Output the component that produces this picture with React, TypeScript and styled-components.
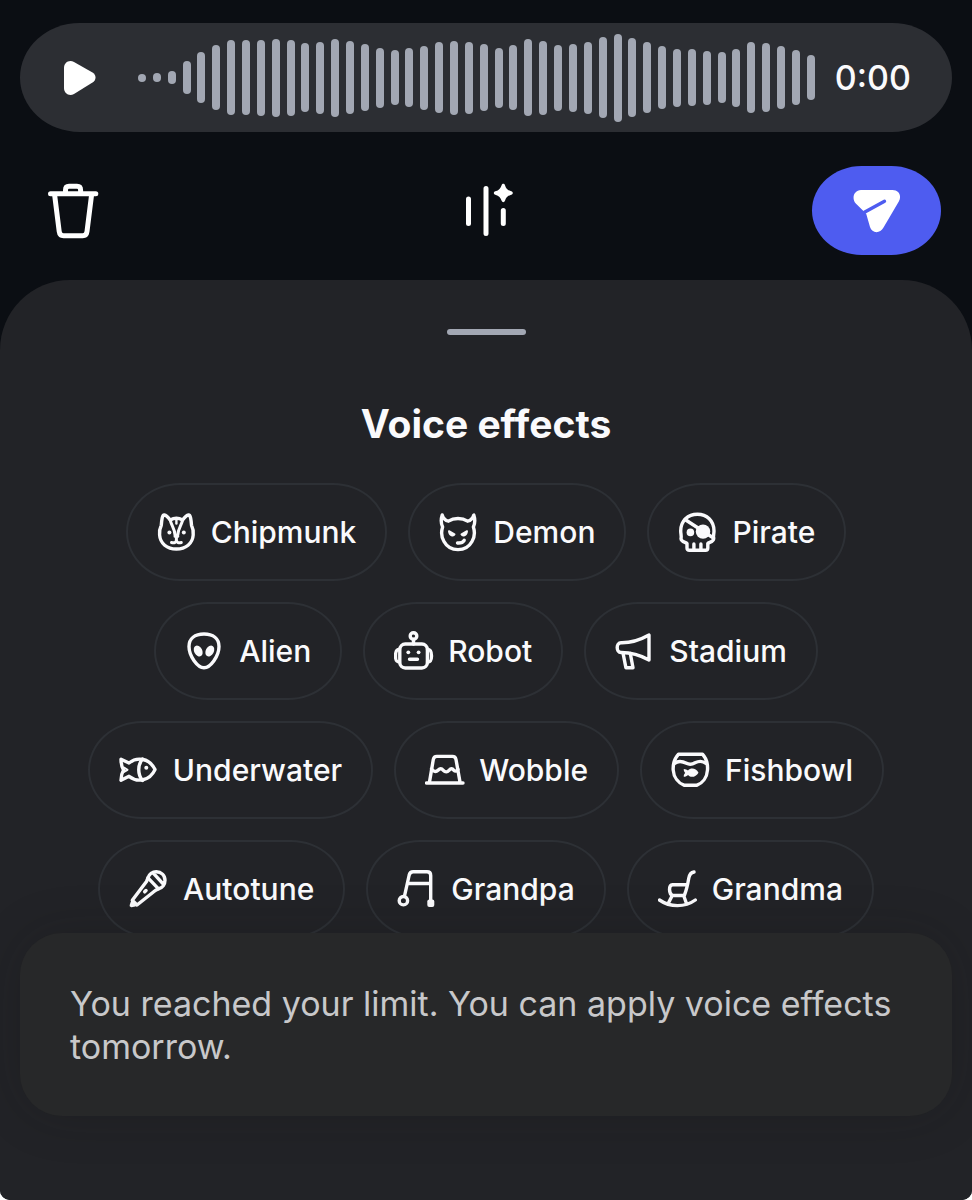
import React from "react";
import styled, { createGlobalStyle } from "styled-components";

const GlobalStyle = createGlobalStyle`
  * { box-sizing: border-box; }
  body {
    margin: 0;
    background: #fff;
    color: #fafafc;
    font-family: Inter, "Liberation Sans", sans-serif;
  }
  button { font: inherit; color: inherit; }
`;

const Screen = styled.main`
  display: flex;
  flex-direction: column;
  min-height: 100vh;
  overflow: hidden;
  border-radius: 0 0 10px 10px;
  background: #0b0e13;
`;

const VoiceBar = styled.section`
  display: flex;
  align-items: center;
  height: 109px;
  margin: 23px 20px 0;
  padding: 0 41px 0 44px;
  border-radius: 60px / 55px;
  background: #2c2e33;
`;

const BareButton = styled.button`
  display: flex;
  align-items: center;
  justify-content: center;
  padding: 0;
  border: 0;
  background: none;
  cursor: pointer;
`;

const Waveform = styled.div`
  flex: 1;
  display: flex;
  align-items: center;
  justify-content: space-between;
  height: 90px;
  margin: 0 20px 0 42px;
`;

const Bar = styled.span`
  width: 8px;
  border-radius: 4px;
  background: #a2a7b3;
`;

const Time = styled.time`
  min-width: 76px;
  font-size: 34px;
  font-weight: 500;
  line-height: 44px;
  text-align: right;
`;

const Toolbar = styled.div`
  display: grid;
  grid-template-columns: 1fr auto 1fr;
  align-items: center;
  height: 89px;
  margin: 34px 31px 25px;

  > :last-child { justify-self: end; }
`;

const DeleteButton = styled(BareButton)`
  justify-self: start;
  padding: 0 17px;
`;

const SendButton = styled(BareButton)`
  width: 129px;
  height: 89px;
  border-radius: 50px / 45px;
  background: #4e5cf0;
`;

const Sheet = styled.section`
  position: relative;
  flex: 1;
  display: flex;
  flex-direction: column;
  align-items: center;
  padding: 49px 20px 262px;
  border-radius: 70px 70px 0 0;
  background: #222327;
`;

const Handle = styled.div`
  width: 79px;
  height: 6px;
  border-radius: 3px;
  background: #a2a7b3;
`;

const Title = styled.h1`
  margin: 64px 0 35px;
  font-size: 39px;
  font-weight: 700;
  line-height: 49px;
`;

const Effects = styled.div`
  display: flex;
  flex-direction: column;
  gap: 21px;
`;

const EffectRow = styled.div`
  display: flex;
  justify-content: center;
  gap: 21px;
`;

const Chip = styled.button`
  display: flex;
  align-items: center;
  gap: 14px;
  height: 98px;
  padding: 0 29px;
  border: 2px solid #2d3035;
  border-radius: 54px / 49px;
  background: none;
  font-size: 30px;
  font-weight: 500;
  line-height: 36px;
  cursor: pointer;
`;

const ChipIcon = styled.svg`
  flex: none;
  width: 40px;
  height: 40px;
  fill: none;
  stroke: currentColor;
  stroke-width: 3.4;
  stroke-linecap: round;
  stroke-linejoin: round;

  .solid { fill: currentColor; }
  .dot { fill: currentColor; stroke: none; }
`;

const Toast = styled.p`
  position: absolute;
  right: 20px;
  bottom: 84px;
  left: 20px;
  margin: 0;
  padding: 49px 50px 48px;
  border-radius: 42px;
  background: #272829;
  box-shadow: 0 0 50px rgba(20, 20, 22, 0.2);
  color: #c8c8ca;
  font-size: 34px;
  line-height: 43px;
`;

const levels = [
  8, 9, 13, 33, 51, 65, 75, 75, 76, 78, 76, 69, 72, 78, 73, 67, 60, 55, 59, 64, 71, 74, 72,
  67, 60, 65, 77, 74, 66, 68, 72, 81, 88, 79, 71, 63, 58, 57, 54, 51, 58, 71, 69, 63, 55, 45,
];

type Effect = { name: string; icon: React.ReactNode };

const rows: Effect[][] = [
  [
    {
      name: "Chipmunk",
      icon: (
        <>
          <path d="M13.200 8C11.400 5.500 9.400 3.300 7.300 3C5.200 2.700 4.700 8 4.300 13.200C2.900 16 2.200 19 2.600 23C3.200 31.500 10 37 19.400 37S35.600 31.500 36.200 23C36.600 19 35.900 16 34.500 13.200C34.100 8 33.600 2.700 31.500 3C29.400 3.300 27.400 5.500 25.600 8C21.500 5.800 17.300 5.800 13.200 8Z" />
          <path strokeWidth="3" d="M13.200 8C14.200 13.500 17.800 16.500 18 23M25.600 8C24.600 13.500 21 16.500 20.800 23" />
          <path strokeWidth="2.400" d="M19.400 7.500V11.500" />
          <path strokeWidth="3" d="M18 24.300H20.800M19.400 24V28.500M14.500 30.500C17 31.300 19 30.500 19.400 28.500C19.800 30.500 21.800 31.300 24.300 30.500" />
          <circle className="dot" cx="12.400" cy="20.500" r="2" />
          <circle className="dot" cx="26.800" cy="20.500" r="2" />
        </>
      ),
    },
    {
      name: "Demon",
      icon: (
        <>
          <path d="M3.200 3C1.600 8 2.200 12 3.600 15C2 20 2.300 25 5 29.500C8 35 13 37.600 19 37.600S30 35 33 29.500C35.700 25 36 20 34.400 15C35.800 12 36.400 8 34.800 3C33.800 6.500 31.500 8.600 28.600 9.200C23 5.500 15 5.500 9.400 9.200C6.500 8.600 4.200 6.500 3.200 3Z" />
          <path className="solid" strokeWidth="2" d="M10 19.200L15.500 22.300C14.500 24.300 10.500 24 10 19.200ZM28 19.200L22.500 22.300C23.500 24.300 27.500 24 28 19.200Z" />
          <path d="M18.500 31C21.500 31.300 24 30.300 25.200 28.300" />
        </>
      ),
    },
    {
      name: "Pirate",
      icon: (
        <>
          <path d="M9 31.500C8 30.200 3 30 3 26.500C3.700 24.500 2.700 22 2.700 19C2.700 8.500 10 2.200 19.400 2.200S36 8.500 36 19C36 22 35 24.500 35.700 26.500C35.700 30 30.800 30.200 29.800 31.500V36C29.800 37.700 28.900 38.300 27.500 38.300H11.300C9.900 38.300 9 37.700 9 36Z" />
          <path d="M15.900 32V38M22.900 32V38M7 7.500L35.500 26" />
          <circle className="dot" cx="12.400" cy="20.400" r="3.800" />
          <circle className="dot" cx="25" cy="19.600" r="7.200" />
        </>
      ),
    },
  ],
  [
    {
      name: "Alien",
      icon: (
        <>
          <path d="M19 3C10 3 4 7.500 4 15.500C4 25 12.500 36.700 19 36.700S34 25 34 15.500C34 7.500 28 3 19 3Z" />
          <ellipse className="dot" cx="13.200" cy="20" rx="4" ry="5.800" transform="rotate(-28 13.200 20)" />
          <ellipse className="dot" cx="24.800" cy="20" rx="4" ry="5.800" transform="rotate(28 24.800 20)" />
        </>
      ),
    },
    {
      name: "Robot",
      icon: (
        <>
          <circle cx="19.500" cy="5" r="3.300" />
          <path d="M19.500 8.500V13M15.500 28.300H23.500M5.500 18.500C2.500 18.500 1.500 20 1.500 25S2.500 31 5.500 31M33.500 18.500C36.500 18.500 37.500 20 37.500 25S36.500 31 33.500 31" />
          <rect x="5.800" y="13" width="27.600" height="24" rx="5.500" />
          <circle className="dot" cx="14.300" cy="21.300" r="1.900" />
          <circle className="dot" cx="24.600" cy="21.300" r="1.900" />
        </>
      ),
    },
    {
      name: "Stadium",
      icon: (
        <>
          <path d="M6 11.800C16 12 25 9 34 4V29C26 24.500 16 21.500 6 21.500C3.500 21.500 2.200 19 2.200 16.600S3.500 11.800 6 11.800Z" />
          <path d="M8 22L10.900 36.700H18L15.300 22.500" />
        </>
      ),
    },
  ],
  [
    {
      name: "Underwater",
      icon: (
        <>
          <path d="M2 9.200L10 13C18 6.500 30.500 8 36 19.600C30.500 31.500 18 32.500 10 26.300L2 30.300C2 26.500 2.500 23.500 4.500 20C2.500 16.500 2 13 2 9.200Z" />
          <path d="M23.500 9C18.500 15 18.500 24.500 23.500 30.500" />
          <path strokeWidth="2" d="M5 17.500L8.500 19.800L5 22" />
          <circle className="dot" cx="27.300" cy="17.800" r="2" />
        </>
      ),
    },
    {
      name: "Wobble",
      icon: (
        <>
          <path d="M1.500 33H38M4.500 32L8.300 9.500C8.700 7.500 9.800 6.400 11.800 6.400H27.500C29.500 6.400 30.600 7.500 31 9.500L35 32" />
          <path d="M6.500 19C8.500 21.800 11 22.300 13 20.300C15 18.300 16.500 18.300 18.300 20.300C20.300 22.500 22.200 22.300 24 20.300C25.800 18.300 27.300 18.300 28.800 20.300C30.300 21.800 31.800 21.200 33 19.500" />
        </>
      ),
    },
    {
      name: "Fishbowl",
      icon: (
        <>
          <path d="M7.500 4.200H31.500C35 8 37 13 36.500 20C36 27.500 31.500 33 26 35.200H13C7.500 33 2.700 27.500 2.200 20C1.800 13 4 8 7.500 4.200Z" />
          <path d="M3.500 13.500C7 10.500 12 11.500 15.500 13.300C18.500 14.800 21 14.500 24 12.800C28 10.800 32 11 35 13.500" />
          <path className="dot" d="M12.800 19C14.500 19 16 19.800 17 20.500C20 17.300 25 18.200 27.500 22.700C25 27 20 28.300 17 25C16 26 14.500 26.800 12.800 26.800C12.500 25 13.200 24 14.200 22.900C13.200 21.800 12.500 20.500 12.800 19Z" />
        </>
      ),
    },
  ],
  [
    {
      name: "Autotune",
      icon: (
        <>
          <path d="M19 8.800C20 5 23.500 2.700 27.300 2.700C32.200 2.700 36 6.300 36 11.200C36 15.300 33.500 18.800 29.500 19.800ZM24.300 4.200L34.300 15.200" />
          <path d="M19 8.800L17.500 12.500L3.300 31.300L8 36L26.300 21.500L29.500 19.800M3.300 33.500L2.300 36.500L6 35.800" />
          <path strokeWidth="3.500" d="M15.700 22.800L17 21.500" />
        </>
      ),
    },
    {
      name: "Grandpa",
      icon: (
        <>
          <circle cx="6.400" cy="31.700" r="4.200" />
          <path d="M7.500 27L12.200 6C12.800 3.700 14 2.800 16.200 2.800H30C32.300 2.800 33.700 4.200 33.700 6.500V32M10.500 14.500H33.700" />
          <rect className="dot" x="30.300" y="30.500" width="7" height="7.500" rx="2" />
        </>
      ),
    },
    {
      name: "Grandma",
      icon: (
        <>
          <path d="M1.500 31C12 38.500 27 38.500 37.300 31M36 3C32.500 3.500 31.300 6 30.700 9.500C29.800 15 28.500 21 26.300 26.500H14.500C10.800 25 10.300 16 14.500 15.700H29.300M14 27L10.200 34.500M25.800 27L28.500 34.500" />
        </>
      ),
    },
  ],
];

export default function App() {
  return (
    <Screen>
      <GlobalStyle />
      <VoiceBar aria-label="Voice message">
        <BareButton type="button" aria-label="Play">
          <svg width="32" height="36" viewBox="0 0 32 36" fill="#fff">
            <path d="M0 8C0 2.500 5 -.5 10 2L28.500 12.500C32.500 15 32.500 20 28.500 22.500L10 34C5 36.500 0 33.500 0 28Z" />
          </svg>
        </BareButton>
        <Waveform aria-hidden="true">
          {levels.map((level, i) => (
            <Bar key={i} style={{ height: level }} />
          ))}
        </Waveform>
        <Time>0:00</Time>
      </VoiceBar>

      <Toolbar>
        <DeleteButton type="button" aria-label="Delete">
          <svg width="51" height="56" viewBox="0 0 51 56" fill="none" stroke="#fff" strokeWidth="5" strokeLinecap="round" strokeLinejoin="round">
            <path d="M2.500 10.700H47.800" />
            <path d="M17.500 9.500V7C17.500 4.500 18.500 3.200 21 3.200H29C31.500 3.200 32.600 4.500 32.600 7V9.500" />
            <path d="M6.700 12.500L11.200 48.500C11.600 51.500 13 52.800 15.500 52.800H34.700C37.200 52.800 38.600 51.500 39 48.500L43.500 12.500" />
          </svg>
        </DeleteButton>
        <BareButton type="button" aria-label="Voice effects">
          <svg width="56" height="56" viewBox="-6 0 56 56" fill="none" stroke="#fff" strokeWidth="5" strokeLinecap="round">
            <path d="M4.500 16V40.500M22 5.500V50.500M39.300 27.500V40.500" />
            <path fill="#fff" stroke="none" d="M37.600 2.200C38.300 .3 40.300 .3 41 2.200C42 5.300 43.500 7.300 47.300 8.300C49.300 9 49.300 11 47.300 11.700C43.500 12.700 42 14.700 41 17.800C40.300 19.700 38.300 19.700 37.600 17.800C36.600 14.700 35.100 12.700 31.300 11.700C29.300 11 29.300 9 31.300 8.300C35.100 7.300 36.600 5.300 37.600 2.200Z" />
          </svg>
        </BareButton>
        <SendButton type="button" aria-label="Send">
          <svg width="48" height="44" viewBox="0 0 48 44">
            <path fill="#fff" d="M8 1H39.500C46 1 49 7 45.800 12.500L30.500 38.500C27 45 19 44.500 17 38L13.200 24.800L2.800 14.500C-1.800 9.500 1 1 8 1Z" />
            <path fill="none" stroke="#4e5cf0" strokeWidth="3.400" strokeLinecap="round" d="M10.500 23.800L31.500 12.200" />
          </svg>
        </SendButton>
      </Toolbar>

      <Sheet aria-labelledby="effects-title">
        <Handle />
        <Title id="effects-title">Voice effects</Title>
        <Effects>
          {rows.map((row) => (
            <EffectRow key={row[0].name}>
              {row.map((effect) => (
                <Chip key={effect.name} type="button">
                  <ChipIcon viewBox="0 0 40 40" aria-hidden="true">
                    {effect.icon}
                  </ChipIcon>
                  {effect.name}
                </Chip>
              ))}
            </EffectRow>
          ))}
        </Effects>
        <Toast role="status">
          You reached your limit. You can apply voice effects tomorrow.
        </Toast>
      </Sheet>
    </Screen>
  );
}
